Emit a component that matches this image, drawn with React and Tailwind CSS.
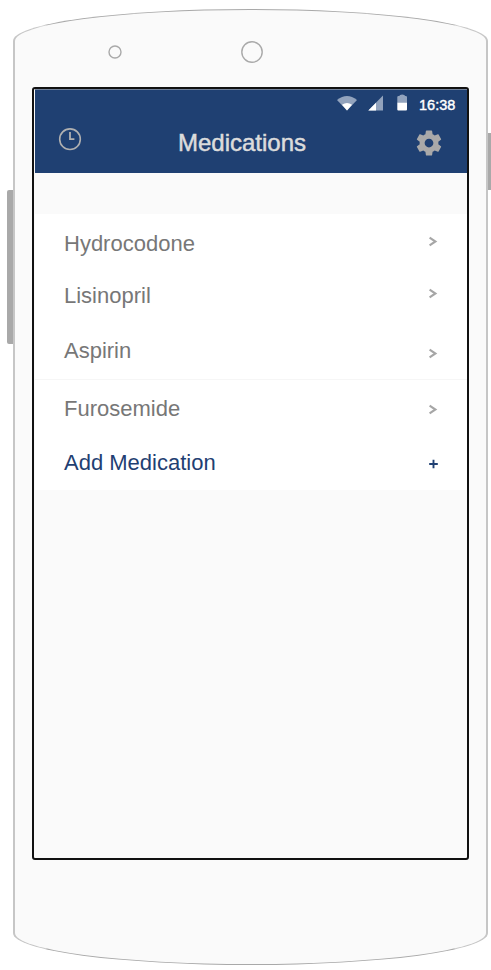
import React from "react";

const ROWS = [
  { name: "Hydrocodone", row: "h-[55px]", text: "mt-[18px]", icon: "mt-[22px]" },
  { name: "Lisinopril", row: "h-[54px]", text: "mt-[15px]", icon: "mt-[19px]" },
  { name: "Aspirin", row: "h-[57px] border-b border-[#f6f6f6]", text: "mt-[16px]", icon: "mt-[25px]" },
  { name: "Furosemide", row: "h-[55px]", text: "mt-[17px]", icon: "mt-[24px]" },
];

function Chevron({ className }) {
  return (
    <svg className={"h-[11px] w-[10px] shrink-0 " + className} viewBox="0 0 10 11">
      <path d="M1.6 1.7 L7.4 5.5 L1.6 9.3" fill="none" stroke="#a6a6a6" strokeWidth="2.1" />
    </svg>
  );
}

function Ring({ className, r }) {
  return (
    <svg className={"h-[24px] w-[24px] " + className} viewBox="0 0 24 24">
      <circle cx="12" cy="12" r={r} fill="none" stroke="#a9a9a9" strokeWidth="1.4" />
    </svg>
  );
}

function StatusIcons() {
  return (
    <svg className="h-[18px] w-[72px]" viewBox="337 94 72 18">
      <path d="M337 100 Q347 92 357 100 L347 110.5 Z" fill="#92a3bd" />
      <path d="M342 104.7 Q347 101.2 352 104.7 L347 110.5 Z" fill="#fff" />
      <path d="M368.3 110.5 L383 95.5 V110.5 Z" fill="#92a3bd" />
      <path d="M368.3 110.5 L376 102.7 V110.5 Z" fill="#fff" />
      <path d="M397.3 103 V97 Q397.3 96 398.5 96 H399.2 Q399.5 94.5 402.2 94.5 Q404.8 94.5 405.2 96 H405.7 Q407 96 407 97 V103 Z" fill="#92a3bd" />
      <path d="M397.3 102.7 H407 V109.6 Q407 110.6 406 110.6 H398.3 Q397.3 110.6 397.3 109.6 Z" fill="#fff" />
    </svg>
  );
}

function Clock() {
  return (
    <svg className="h-[24px] w-[24px]" viewBox="0 0 24 24" fill="none" stroke="#b0b0b0">
      <circle cx="12" cy="12.2" r="10.3" strokeWidth="1.6" />
      <path d="M12 5 V12.1 H16.4" strokeWidth="1.8" />
    </svg>
  );
}

function Gear() {
  return (
    <svg className="h-[30px] w-[30px]" viewBox="0 0 24 24" fill="#a9a9a9">
      <path d="M19.43 12.98c.04-.32.07-.64.07-.98s-.03-.66-.07-.98l2.11-1.65c.19-.15.24-.42.12-.64l-2-3.46c-.12-.22-.39-.3-.61-.22l-2.49 1c-.52-.4-1.08-.73-1.69-.98l-.38-2.65C14.46 2.18 14.25 2 14 2h-4c-.25 0-.46.18-.49.42l-.38 2.65c-.61.25-1.17.59-1.69.98l-2.49-1c-.23-.09-.49 0-.61.22l-2 3.46c-.13.22-.07.49.12.64l2.11 1.65c-.04.32-.07.65-.07.98s.03.66.07.98l-2.11 1.65c-.19.15-.24.42-.12.64l2 3.46c.12.22.39.3.61.22l2.49-1c.52.4 1.08.73 1.69.98l.38 2.65c.03.24.24.42.49.42h4c.25 0 .46-.18.49-.42l.38-2.65c.61-.25 1.17-.59 1.69-.98l2.49 1c.23.09.49 0 .61-.22l2-3.46c.12-.22.07-.49-.12-.64l-2.11-1.65zM12 15.5c-1.93 0-3.5-1.57-3.5-3.5s1.57-3.5 3.5-3.5 3.5 1.57 3.5 3.5-1.57 3.5-3.5 3.5z" />
    </svg>
  );
}

export default function App() {
  return (
    <div className="h-[970px] w-[491px] overflow-hidden bg-white pt-[9px] font-['Liberation_Sans',Arial,sans-serif]">
      <div className="flex items-start">
        <div className="mt-[181px] ml-[7px] h-[154px] w-[6px] shrink-0 rounded-l-[2px] bg-[#a9a9a9]" />
        <div className="h-[956px] w-[475px] shrink-0 rounded-[50%/32px] border border-r-2 border-l-2 border-[#a9a9a9] border-r-[#c6c6c6] border-l-[#c6c6c6] bg-[#fafafa]">
          <div className="flex h-[77px] items-start">
            <Ring className="mt-[30px] ml-[88px]" r="6" />
            <Ring className="mt-[30px] ml-[113px]" r="10.2" />
          </div>
          <div className="ml-[17px] h-[773px] w-[437px] rounded-[3px] border-2 border-[#111] bg-[#fafafa] pl-px">
            <header className="h-[84px] w-[432px] border-t border-[#71819a] bg-[#1f4072]">
              <div className="flex h-[27px] items-start justify-end pr-[12px]">
                <div className="mt-[4px] mr-[10px]">
                  <StatusIcons />
                </div>
                <span className="mt-[6px] w-[36px] text-[14.5px] leading-[18px] whitespace-nowrap text-white [-webkit-text-stroke:0.4px_white]">16:38</span>
              </div>
              <div className="flex items-start">
                <div className="mt-[10px] ml-[23px] w-[24px]">
                  <Clock />
                </div>
                <h1 className="mt-[12px] ml-[96px] w-[132px] text-[24px] leading-[28px] text-[#dcdcdc] [-webkit-text-stroke:0.5px_#dcdcdc]">Medications</h1>
                <div className="mt-[11px] ml-[104px]">
                  <Gear />
                </div>
              </div>
            </header>
            <main className="mt-[41px] h-[276px] w-[432px] bg-white text-[22px] leading-[24px] text-[#777]">
              {ROWS.map((r) => (
                <div key={r.name} className={"flex items-start justify-between pr-[29px] pl-[29px] " + r.row}>
                  <span className={r.text}>{r.name}</span>
                  <Chevron className={r.icon} />
                </div>
              ))}
              <div className="flex h-[55px] items-start justify-between pr-[29px] pl-[29px] text-[#1f4072]">
                <span className="mt-[16px]">Add Medication</span>
                <svg className="mt-[24px] h-[10px] w-[10px]" viewBox="0 0 10 10">
                  <path d="M5.5 0.8 V9.2 M1.2 5 H9.8" stroke="#1f4072" strokeWidth="1.9" />
                </svg>
              </div>
            </main>
          </div>
        </div>
        <div className="mt-[124px] h-[57px] w-[3px] shrink-0 bg-[#a9a9a9]" />
      </div>
    </div>
  );
}
